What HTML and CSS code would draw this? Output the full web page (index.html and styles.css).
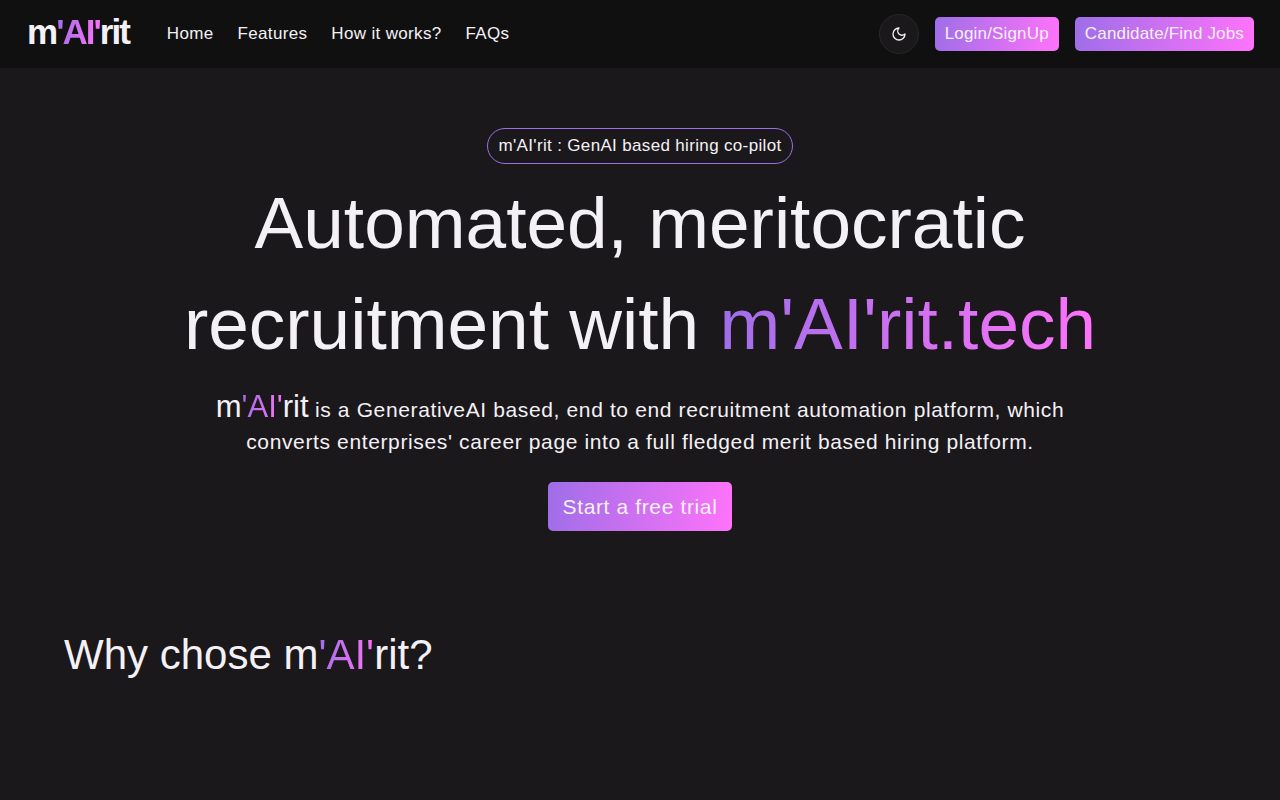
FILE: index.html
```html
<!DOCTYPE html>
<html lang="en">
<head>
    <meta charset="UTF-8">
    <meta name="viewport" content="width=device-width, initial-scale=1.0">
    <title>m'AI'rit</title>
    <link rel="stylesheet" href="styles.css">
</head>
<body>
    <header class="navbar">
        <a class="logo" href="#">m<span class="gradient-text">'AI'</span>rit</a>
        <nav class="nav-links">
            <a href="#home">Home</a>
            <a href="#features">Features</a>
            <a href="#how">How it works?</a>
            <a href="#faqs">FAQs</a>
        </nav>
        <div class="nav-actions">
            <button class="theme-btn" type="button" aria-label="Toggle theme">
                <svg width="16" height="16" viewBox="0 0 24 24" fill="none" stroke="currentColor" stroke-width="2" stroke-linecap="round" stroke-linejoin="round"><path d="M12 3a6 6 0 0 0 9 9 9 9 0 1 1-9-9Z"/></svg>
            </button>
            <button class="btn" type="button">Login/SignUp</button>
            <button class="btn" type="button">Candidate/Find Jobs</button>
        </div>
    </header>

    <main>
        <section class="hero" id="home">
            <div class="badge">m'AI'rit : GenAI based hiring co-pilot</div>
            <h1>Automated, meritocratic recruitment with <span class="gradient-text">m'AI'rit.tech</span></h1>
            <p class="intro"><span class="brand">m<span class="gradient-text">'AI'</span>rit</span> is a GenerativeAI based, end to end recruitment automation platform, which converts enterprises' career page into a full fledged merit based hiring platform.</p>
            <button class="btn btn-large" type="button">Start a free trial</button>
        </section>

        <section class="why" id="features">
            <h2>Why chose m<span class="gradient-text">'AI'</span>rit?</h2>
        </section>
    </main>
</body>
</html>
```
FILE: styles.css
```css
* {
    box-sizing: border-box;
}
body {
    margin: 0;
    font-family: "Liberation Sans", Arial, sans-serif;
    font-size: 17px;
    line-height: 24px;
    letter-spacing: 0.02em;
    background-color: #1b181b;
    color: #f4f1f6;
}
a {
    color: inherit;
    text-decoration: none;
}
h1, h2, p {
    margin: 0;
    font-weight: 400;
}
h1, h2 {
    letter-spacing: normal;
}
button {
    font: inherit;
    letter-spacing: inherit;
    color: inherit;
    cursor: pointer;
}
.gradient-text {
    background: linear-gradient(98deg, #9e6ee8, #ff73fa);
    -webkit-background-clip: text;
    background-clip: text;
    color: transparent;
}

/* Navbar */
.navbar {
    display: flex;
    align-items: center;
    height: 68px;
    padding: 0 26px;
    background-color: #101010;
}
.logo {
    padding: 0 1px 4px;
    font-size: 35px;
    line-height: 40px;
    font-weight: 700;
    letter-spacing: -2px;
}
.nav-links {
    display: flex;
    gap: 24px;
    margin-left: 37px;
}
.nav-actions {
    display: flex;
    align-items: center;
    gap: 16px;
    margin-left: auto;
    letter-spacing: 0.01em;
}
.theme-btn {
    display: flex;
    align-items: center;
    justify-content: center;
    width: 40px;
    height: 40px;
    padding: 0;
    border: 1px solid #29262b;
    border-radius: 50%;
    background-color: #1b181b;
}
.btn {
    padding: 5px 10px;
    border: none;
    border-radius: 5px;
    background: linear-gradient(98deg, #9e6ee8, #ff73fa);
}

/* Hero */
.hero {
    display: flex;
    flex-direction: column;
    align-items: center;
    max-width: 960px;
    margin: 0 auto;
    padding-top: 60px;
    text-align: center;
}
.badge {
    padding: 5px 10px;
    border: 1px solid #9e6ee8;
    border-radius: 20px;
}
h1 {
    margin-top: 8px;
    font-size: 73px;
    line-height: 101px;
}
.intro {
    max-width: 896px;
    margin-top: 17px;
    font-size: 21px;
    line-height: 32px;
    letter-spacing: 0.03em;
}
.brand {
    font-size: 31px;
    letter-spacing: 0;
}
.btn-large {
    margin-top: 24px;
    padding: 8px 15px;
    font-size: 21px;
    line-height: 33px;
    letter-spacing: 0.03em;
}

/* Why section */
.why {
    padding: 92px 64px 100px;
}
h2 {
    font-size: 42px;
    line-height: 64px;
}
```
